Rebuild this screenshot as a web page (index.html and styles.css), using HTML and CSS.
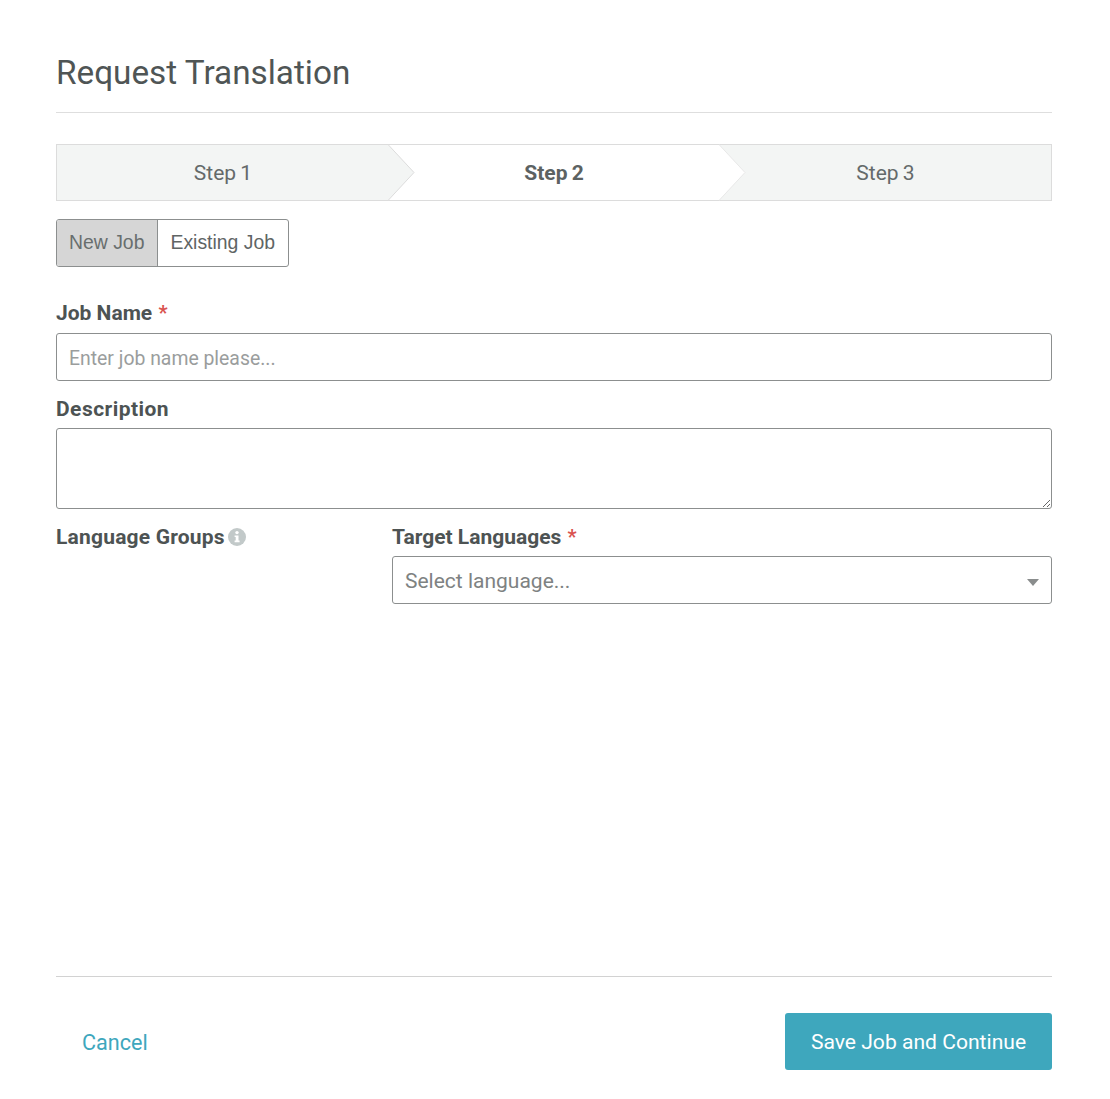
FILE: index.html
```html
<!DOCTYPE html>
<html lang="en">
<head>
    <meta charset="UTF-8">
    <meta name="viewport" content="width=device-width, initial-scale=1.0">
    <title>Request Translation</title>
    <link rel="stylesheet" href="styles.css">
</head>
<body>
    <div class="modal">
        <h1 class="modal-title">Request Translation</h1>

        <!-- Steps -->
        <div class="steps">
            <div class="step done">
                Step 1
                <svg class="step-arrow" width="28" height="57" viewBox="0 0 28 57"><path d="M0 0.5 L26 28.5 L0 56.5" fill="#f3f5f4" stroke="#dcdcdc"/></svg>
            </div>
            <div class="step current">
                Step 2
                <svg class="step-arrow" width="28" height="57" viewBox="0 0 28 57"><path d="M0 0.5 L26 28.5 L0 56.5" fill="#fff" stroke="#e8e8e8"/></svg>
            </div>
            <div class="step">Step 3</div>
        </div>

        <div class="toggle">
            <div class="toggle-btn active">New Job</div>
            <div class="toggle-btn">Existing Job</div>
        </div>

        <!-- Form -->
        <label class="label label-job">Job Name <span class="req">*</span></label>
        <input class="field" type="text" placeholder="Enter job name please...">

        <label class="label label-desc">Description</label>
        <textarea class="field area"></textarea>

        <div class="lang-row">
            <div class="lang-groups">
                <label class="label label-groups">Language Groups
                    <svg class="info" width="18" height="18" viewBox="0 0 18 18">
                        <circle cx="9" cy="9" r="9" fill="#c2c9c9"/>
                        <circle cx="9" cy="4.6" r="1.7" fill="#fff"/>
                        <path d="M6.6 7.4 H10.5 V12.6 H11.6 V14.3 H6.6 V12.6 H7.7 V9.1 H6.6 Z" fill="#fff"/>
                    </svg>
                </label>
            </div>
            <div class="lang-target">
                <label class="label">Target Languages <span class="req">*</span></label>
                <div class="select">
                    <span class="select-text">Select language...</span>
                    <span class="caret"></span>
                </div>
            </div>
        </div>

        <div class="footer">
            <a class="cancel" href="#">Cancel</a>
            <button class="btn-save">Save Job and Continue</button>
        </div>
    </div>
</body>
</html>
```

FILE: styles.css
```css
* {
    box-sizing: border-box;
}
body {
    margin: 0;
    background: white;
    color: #4d5353;
    font-family: Roboto, "Liberation Sans", sans-serif;
}
.modal {
    width: 1110px;
    height: 1099px;
    padding: 0 58px 0 56px;
}
.modal-title {
    margin: 0;
    height: 113px;
    padding-top: 52px;
    border-bottom: 1px solid #dedede;
    font-size: 33.3px;
    line-height: 42px;
    font-weight: 400;
    color: #4f5555;
}

/* Steps */
.steps {
    display: flex;
    height: 57px;
    margin-top: 31px;
    border: 1px solid #dcdcdc;
}
.step {
    position: relative;
    display: flex;
    align-items: center;
    justify-content: center;
    background: #f3f5f4;
    font-size: 21px;
    word-spacing: -1px;
    color: #646a6a;
    width: 331px;
    padding-left: 1px;
}
.step.current {
    background: white;
    font-weight: 700;
    color: #5c6262;
}
.step:last-child {
    flex: 1;
}
.step-arrow {
    position: absolute;
    top: -1px;
    left: 100%;
    z-index: 1;
}

/* Toggle */
.toggle {
    display: inline-flex;
    height: 48px;
    margin-top: 18px;
    border: 1px solid #8c8f8f;
    border-radius: 3px;
    overflow: hidden;
    vertical-align: top;
}
.toggle-btn {
    display: flex;
    align-items: center;
    padding: 0 13px 1px 12.5px;
    font-size: 19.4px;
    color: #5f6565;
    font-family: "Liberation Sans", Arial, sans-serif;
}
.toggle-btn.active {
    background: #d6d6d6;
    border-right: 1px solid #8c8f8f;
    padding: 0 12.5px 1px 12px;
    color: #686e6e;
}

/* Form */
.label {
    display: block;
    font-size: 21px;
    line-height: 26px;
    font-weight: 700;
    color: #4d5353;
}
.label-job {
    margin-top: 33px;
    margin-bottom: 7px;
}
.label-desc {
    margin-top: 15px;
    margin-bottom: 6px;
    letter-spacing: 0.45px;
}
.label-groups {
    letter-spacing: 0.2px;
}
.req {
    margin-left: 1px;
    font-size: 20px;
    line-height: 1;
    color: #d9534f;
}
.field {
    display: block;
    width: 100%;
    height: 48px;
    padding: 2px 12px 0;
    border: 1px solid #8c8f8f;
    border-radius: 3px;
    font-family: Roboto, "Liberation Sans", sans-serif;
    font-size: 19.4px;
    color: #4d5353;
    background: white;
}
.field::placeholder {
    color: #9a9d9d;
    opacity: 1;
}
.area {
    height: 81px;
}
.lang-row {
    display: flex;
    margin-top: 15px;
}
.lang-groups {
    width: 336px;
}
.lang-target {
    flex: 1;
}
.lang-target .label {
    margin-bottom: 6px;
}
.info {
    margin-left: -2px;
    vertical-align: -2px;
}
.select {
    display: flex;
    align-items: center;
    justify-content: space-between;
    height: 48px;
    padding: 0 12px;
    border: 1px solid #8c8f8f;
    border-radius: 3px;
    font-size: 21px;
    color: #7e8282;
}
.select-text {
    padding-top: 2px;
}
.caret {
    width: 0;
    height: 0;
    border-left: 6.5px solid transparent;
    border-right: 6.5px solid transparent;
    border-top: 7px solid #8a8d8d;
    margin-top: 5px;
}

/* Footer */
.footer {
    display: flex;
    align-items: center;
    justify-content: space-between;
    margin-top: 372px;
    height: 94px;
    padding: 36px 0 0 26px;
    border-top: 1px solid #d2d2d2;
}
.cancel {
    margin-top: 2px;
    font-size: 21.6px;
    color: #3ea7bd;
    text-decoration: none;
}
.btn-save {
    width: 267px;
    height: 57px;
    border: none;
    border-radius: 3px;
    background: #3ea7bd;
    color: white;
    font-family: Roboto, "Liberation Sans", sans-serif;
    font-size: 21.1px;
}
```
